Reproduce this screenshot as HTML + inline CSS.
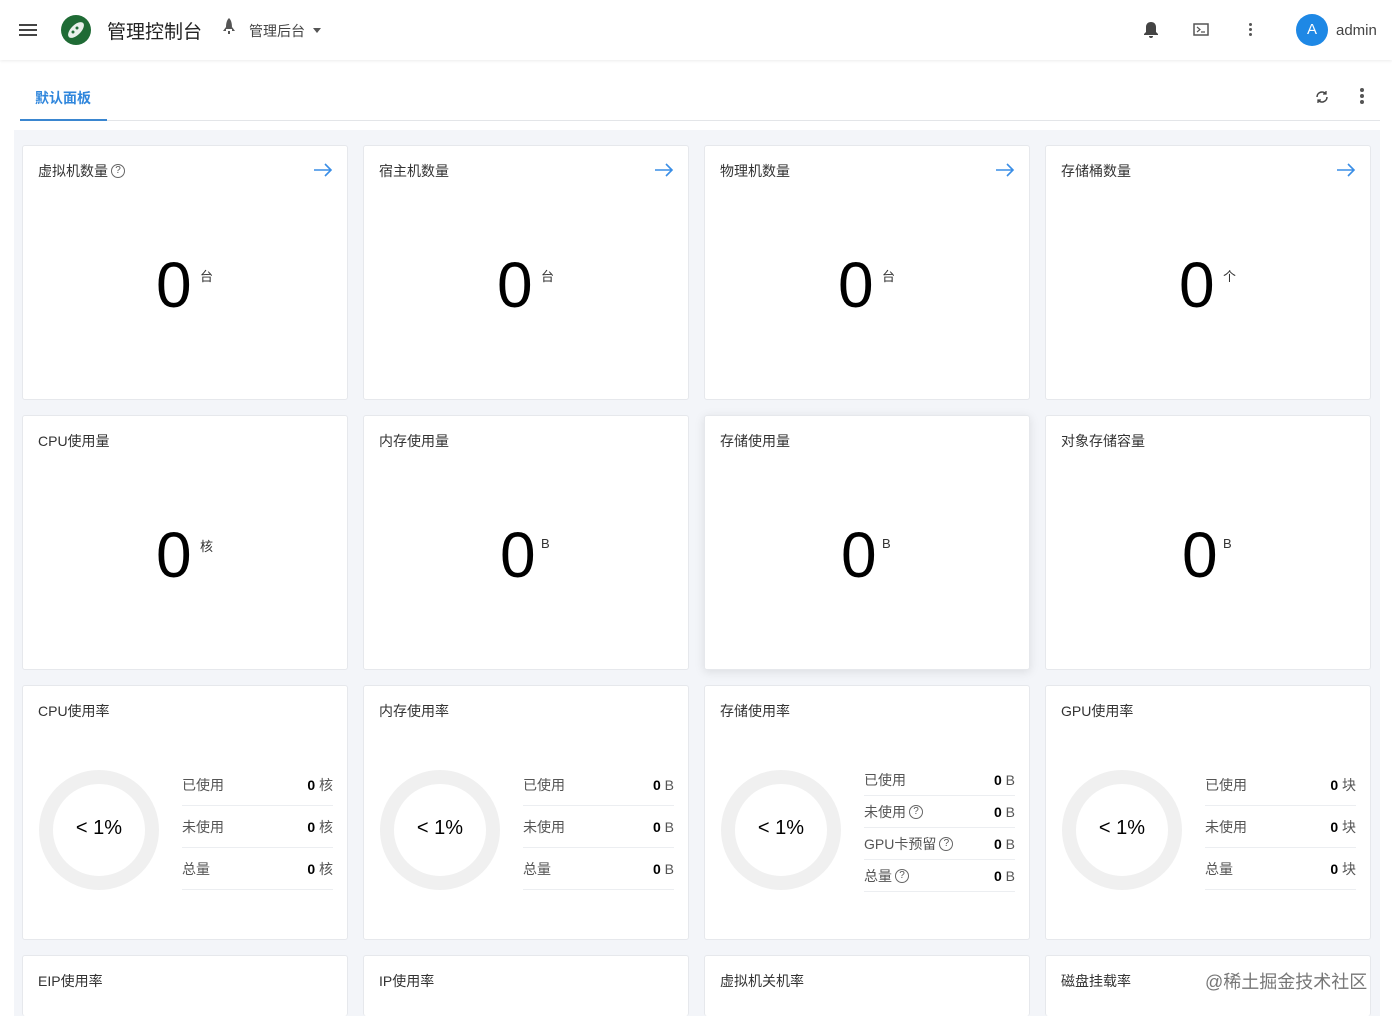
<!DOCTYPE html>
<html style="width:1392px;height:1016px;overflow:hidden"><head><meta charset="utf-8"><style>
*{margin:0;padding:0;box-sizing:border-box}
body{width:1392px;height:1016px;overflow:hidden;background:#fff;font-family:"Liberation Sans","Noto Sans CJK SC",sans-serif;color:#222;position:relative}
.top{position:absolute;left:0;top:0;width:1392px;height:60px;background:#fff;box-shadow:0 1px 3px rgba(0,0,0,.08)}
.abs{position:absolute}
.bg{position:absolute;left:14px;top:130px;width:1366px;height:886px;background:#f3f5f9}
.card{position:absolute;width:326px;height:255px;background:#fff;border:1px solid #e6e8ec;border-radius:3px}
.t{position:absolute;left:15px;top:15px;font-size:14px;color:#333;display:flex;align-items:center}
.arr{position:absolute;right:14px;top:17px}
.big{position:absolute;left:133px;top:107px;font-size:64px;line-height:64px;color:#000}
.u{position:absolute;left:177px;top:120px;font-size:13px;color:#333}
.tbl{position:absolute;left:159px;width:151px}
.r{height:42px;border-bottom:1px solid #eceef1;font-size:14px;color:#555;display:flex;justify-content:space-between;align-items:center}
.r > span:first-child{display:flex;align-items:center}
.r b{color:#000;font-weight:bold}
.r4{height:32px}
.q{display:inline-block;width:14px;height:14px;border:1px solid #666;border-radius:50%;font-size:10px;line-height:12px;text-align:center;color:#555;margin-left:3px}
.don{position:absolute;left:14px;top:82px}
.pct{position:absolute;left:14px;top:131px;width:124px;text-align:center;font-size:20px;color:#000}
</style></head><body>
<div class="top">
 <div class="abs" style="left:19px;top:24px;width:18px;height:2px;background:#444;box-shadow:0 5px 0 #444,0 10px 0 #444"></div>
 <div class="abs" style="left:61px;top:15px;width:30px;height:30px;border-radius:50%;background:#1f6b35"></div>
 <svg class="abs" style="left:61px;top:15px" width="30" height="30"><ellipse cx="15" cy="15" rx="10" ry="5" fill="#e8f0ea" transform="rotate(-45 15 15)"/><circle cx="12" cy="17" r="1.5" fill="#1f6b35"/><circle cx="16" cy="13" r="1.5" fill="#1f6b35"/></svg>
 <div class="abs" style="left:107px;top:17px;font-size:19px;color:#222">管理控制台</div>
 <svg class="abs" style="left:221px;top:17px" width="16" height="20"><path d="M8 1C5 4 5 8 5 12h6c0-4 0-8-3-11zM5 10l-3 4h3zM11 10l3 4h-3zM7 14h2v3H7z" fill="#555"/></svg>
 <div class="abs" style="left:249px;top:21px;font-size:14px;color:#444">管理后台</div>
 <div class="abs" style="left:313px;top:28px;border:4px solid transparent;border-top:5px solid #555"></div>
 <svg class="abs" style="left:1143px;top:20px" width="16" height="20"><path d="M8 2c-3 0-5 2-5 5v5l-2 2v1h14v-1l-2-2V7c0-3-2-5-5-5zM6 16h4a2 2 0 0 1-4 0z" fill="#444"/></svg>
 <svg class="abs" style="left:1193px;top:23px" width="16" height="14"><rect x="1" y="1" width="14" height="11" fill="none" stroke="#555" stroke-width="1.5"/><path d="M4 4l3 2.5L4 9M8 9h4" stroke="#555" fill="none" stroke-width="1.2"/></svg>
 <div class="abs" style="left:1249px;top:23px;width:3px;height:3px;border-radius:50%;background:#555;box-shadow:0 5px 0 #555,0 10px 0 #555"></div>
 <div class="abs" style="left:1296px;top:14px;width:32px;height:32px;border-radius:50%;background:#1e88e5;color:#fff;text-align:center;line-height:32px;font-size:15px">A</div>
 <div class="abs" style="left:1336px;top:22px;font-size:15px;color:#444">admin</div>
</div>
<div class="abs" style="left:35px;top:88px;font-size:14px;color:#2f86dc;font-weight:bold">默认面板</div>
<div class="abs" style="left:20px;top:120px;width:1360px;height:1px;background:#e3e5e8"></div>
<div class="abs" style="left:20px;top:119px;width:87px;height:2px;background:#3a86d0"></div>
<svg class="abs" style="left:1314px;top:89px" width="16" height="16"><path d="M3 8a5 5 0 0 1 9-3M13 8a5 5 0 0 1-9 3" stroke="#444" stroke-width="1.5" fill="none"/><path d="M12 2v3H9M4 14v-3h3" stroke="#444" stroke-width="1.3" fill="none"/></svg>
<div class="abs" style="left:1360px;top:88px;width:4px;height:4px;border-radius:50%;background:#555;box-shadow:0 6px 0 #555,0 12px 0 #555"></div>
<div class="bg"></div>

<div class="card" style="left:22px;top:145px"><div class="t">虚拟机数量<span class="q">?</span></div><svg class="arr" width="20" height="14"><path d="M1 7h17M12 1l6 6-6 6" stroke="#3a8ee6" stroke-width="1.6" fill="none"/></svg><div class="big">0</div><div class="u">台</div></div>
<div class="card" style="left:363px;top:145px"><div class="t">宿主机数量</div><svg class="arr" width="20" height="14"><path d="M1 7h17M12 1l6 6-6 6" stroke="#3a8ee6" stroke-width="1.6" fill="none"/></svg><div class="big">0</div><div class="u">台</div></div>
<div class="card" style="left:704px;top:145px"><div class="t">物理机数量</div><svg class="arr" width="20" height="14"><path d="M1 7h17M12 1l6 6-6 6" stroke="#3a8ee6" stroke-width="1.6" fill="none"/></svg><div class="big">0</div><div class="u">台</div></div>
<div class="card" style="left:1045px;top:145px"><div class="t">存储桶数量</div><svg class="arr" width="20" height="14"><path d="M1 7h17M12 1l6 6-6 6" stroke="#3a8ee6" stroke-width="1.6" fill="none"/></svg><div class="big">0</div><div class="u">个</div></div>

<div class="card" style="left:22px;top:415px"><div class="t">CPU使用量</div><div class="big">0</div><div class="u">核</div></div>
<div class="card" style="left:363px;top:415px"><div class="t">内存使用量</div><div class="big" style="left:136px">0</div><div class="u">B</div></div>
<div class="card" style="left:704px;top:415px;box-shadow:0 2px 10px rgba(0,0,0,.1)"><div class="t">存储使用量</div><div class="big" style="left:136px">0</div><div class="u">B</div></div>
<div class="card" style="left:1045px;top:415px"><div class="t">对象存储容量</div><div class="big" style="left:136px">0</div><div class="u">B</div></div>

<div class="card" style="left:22px;top:685px"><div class="t">CPU使用率</div>
 <svg class="don" width="124" height="124"><circle cx="62" cy="62" r="53" fill="none" stroke="#f0f0f0" stroke-width="14"/></svg><div class="pct">&lt; 1%</div>
 <div class="tbl" style="top:78px"><div class="r"><span>已使用</span><span><b>0</b> 核</span></div><div class="r"><span>未使用</span><span><b>0</b> 核</span></div><div class="r"><span>总量</span><span><b>0</b> 核</span></div></div></div>
<div class="card" style="left:363px;top:685px"><div class="t">内存使用率</div>
 <svg class="don" width="124" height="124"><circle cx="62" cy="62" r="53" fill="none" stroke="#f0f0f0" stroke-width="14"/></svg><div class="pct">&lt; 1%</div>
 <div class="tbl" style="top:78px"><div class="r"><span>已使用</span><span><b>0</b> B</span></div><div class="r"><span>未使用</span><span><b>0</b> B</span></div><div class="r"><span>总量</span><span><b>0</b> B</span></div></div></div>
<div class="card" style="left:704px;top:685px"><div class="t">存储使用率</div>
 <svg class="don" width="124" height="124"><circle cx="62" cy="62" r="53" fill="none" stroke="#f0f0f0" stroke-width="14"/></svg><div class="pct">&lt; 1%</div>
 <div class="tbl" style="top:78px"><div class="r r4"><span>已使用</span><span><b>0</b> B</span></div><div class="r r4"><span>未使用<span class="q">?</span></span><span><b>0</b> B</span></div><div class="r r4"><span>GPU卡预留<span class="q">?</span></span><span><b>0</b> B</span></div><div class="r r4"><span>总量<span class="q">?</span></span><span><b>0</b> B</span></div></div></div>
<div class="card" style="left:1045px;top:685px"><div class="t">GPU使用率</div>
 <svg class="don" width="124" height="124"><circle cx="62" cy="62" r="53" fill="none" stroke="#f0f0f0" stroke-width="14"/></svg><div class="pct">&lt; 1%</div>
 <div class="tbl" style="top:78px"><div class="r"><span>已使用</span><span><b>0</b> 块</span></div><div class="r"><span>未使用</span><span><b>0</b> 块</span></div><div class="r"><span>总量</span><span><b>0</b> 块</span></div></div></div>

<div class="card" style="left:22px;top:955px;height:61px;border-bottom:none"><div class="t">EIP使用率</div></div>
<div class="card" style="left:363px;top:955px;height:61px;border-bottom:none"><div class="t">IP使用率</div></div>
<div class="card" style="left:704px;top:955px;height:61px;border-bottom:none"><div class="t">虚拟机关机率</div></div>
<div class="card" style="left:1045px;top:955px;height:61px;border-bottom:none"><div class="t">磁盘挂载率</div></div>
<div class="abs" style="left:1205px;top:968px;font-size:18px;color:#777">@稀土掘金技术社区</div>
</body></html>
